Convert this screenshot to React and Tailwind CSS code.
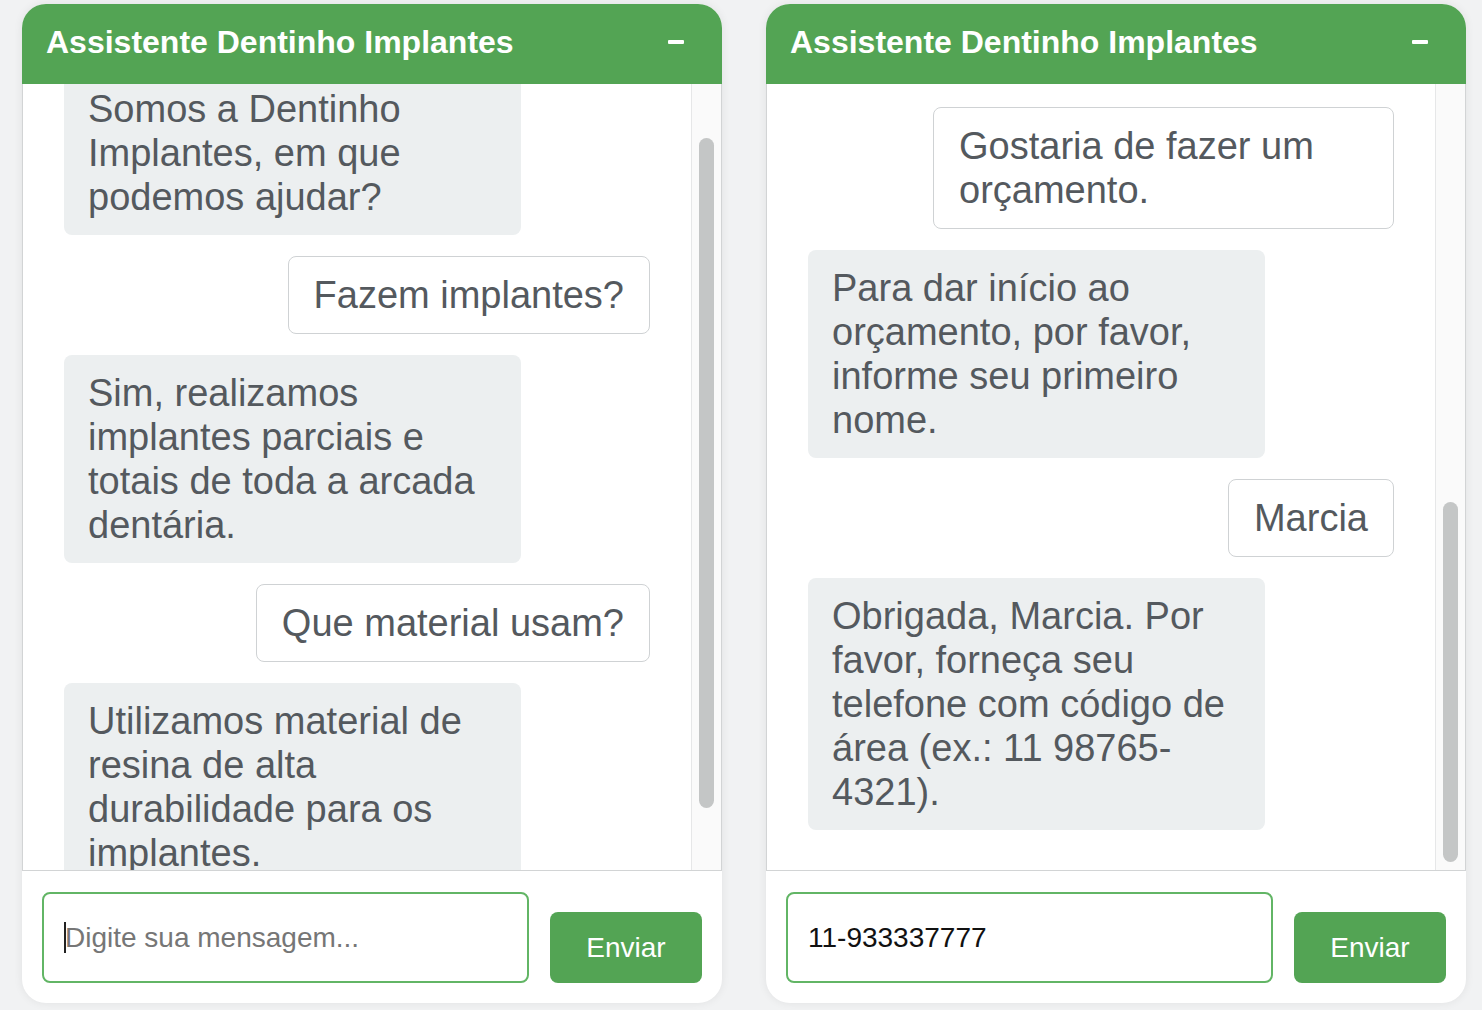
import React from "react";

const FONT = { fontFamily: '"Liberation Sans", Arial, Helvetica, sans-serif' };

function Bot({ children }) {
  return (
    <div className="w-[457px] self-start rounded-[8px] bg-[#eceff0] px-[24px] py-[16px] text-[38px] leading-[44px] text-[#54595e]">
      {children}
    </div>
  );
}

function User({ children }) {
  return (
    <div className="max-w-[461px] self-end rounded-[8px] border border-[#cfd2d4] bg-white px-[25px] py-[16px] text-[38px] leading-[44px] text-[#54595e]">
      {children}
    </div>
  );
}

function Panel({ contentClass, thumbClass, input }) {
  return (
    <div className="flex h-[999px] w-[700px] flex-col overflow-hidden rounded-[24px] bg-white shadow-[0_0_10px_rgba(0,0,0,0.07)]">
      <div className="flex h-[80px] shrink-0 items-center justify-between bg-[#53a454] pb-[4px] pl-[24px] pr-[38px]">
        <span className="text-[32px] font-bold text-white">
          Assistente Dentinho Implantes
        </span>
        <span className="block h-[4px] w-[16px] rounded-[1px] bg-white" />
      </div>
      <div className="flex h-[787px] shrink-0 border-x border-b border-[#d2d4d5]">
        <div className="flex-1 overflow-hidden">
          <div className={`flex flex-col gap-[21px] px-[41px] ${contentClass}`}>
            {input.messages}
          </div>
        </div>
        <div className="w-[30px] shrink-0 border-l border-[#e6e7e8] bg-[#fafafa]">
          <div className={`mx-auto w-[15px] rounded-full bg-[#c4c6c6] ${thumbClass}`} />
        </div>
      </div>
      <div className="flex flex-1 items-end gap-[21px] px-[20px] pb-[20px] pt-[21px]">
        <div className="flex h-[91px] flex-1 items-center rounded-[8px] border-2 border-[#62b565] pl-[20px] text-[28px]">
          {input.field}
        </div>
        <div className="flex h-[71px] w-[152px] items-center justify-center rounded-[8px] bg-[#53a454] text-[28px] text-white">
          Enviar
        </div>
      </div>
    </div>
  );
}

export default function App() {
  return (
    <div
      className="flex h-[1010px] w-[1482px] gap-[44px] bg-[#f1f2f3] pl-[22px] pt-[4px]"
      style={FONT}
    >
      <Panel
        contentClass="-mt-[13px]"
        thumbClass="mt-[54px] h-[670px]"
        input={{
          messages: (
            <>
              <Bot>Somos a Dentinho Implantes, em que podemos ajudar?</Bot>
              <User>Fazem implantes?</User>
              <Bot>Sim, realizamos implantes parciais e totais de toda a arcada dentária.</Bot>
              <User>Que material usam?</User>
              <Bot>Utilizamos material de resina de alta durabilidade para os implantes.</Bot>
            </>
          ),
          field: (
            <>
              <span className="block h-[31px] w-[2px] bg-[#222]" />
              <span className="-ml-[1px] text-[#767676]">Digite sua mensagem...</span>
            </>
          ),
        }}
      />
      <Panel
        contentClass="pt-[23px]"
        thumbClass="mt-[418px] h-[360px]"
        input={{
          messages: (
            <>
              <User>Gostaria de fazer um orçamento.</User>
              <Bot>Para dar início ao orçamento, por favor, informe seu primeiro nome.</Bot>
              <User>Marcia</User>
              <Bot>Obrigada, Marcia. Por favor, forneça seu telefone com código de área (ex.: 11 98765-4321).</Bot>
            </>
          ),
          field: <span className="text-[#111]">11-933337777</span>,
        }}
      />
    </div>
  );
}
